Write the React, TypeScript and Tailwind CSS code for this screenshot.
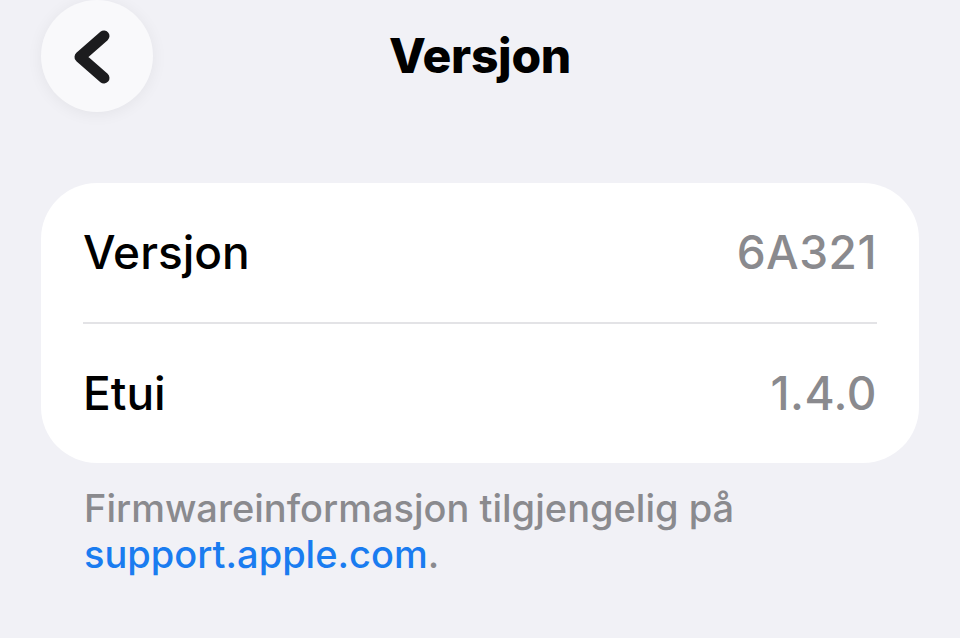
import React from "react";

const rows = [
  { label: "Versjon", value: "6A321" },
  { label: "Etui", value: "1.4.0" },
];

const BackButton = () => (
  <button className="flex h-[112px] w-[112px] items-center justify-center rounded-full bg-[#f9f9fb] shadow-[0_2px_16px_rgba(0,0,0,0.06)]">
    <svg width="112" height="112" viewBox="0 0 112 112" fill="none">
      <path
        d="M63 36 L39 57 L63 78"
        stroke="#1c1c1e"
        strokeWidth="11"
        strokeLinecap="round"
        strokeLinejoin="round"
      />
    </svg>
  </button>
);

export default function App() {
  return (
    <div className="h-[638px] w-[960px] overflow-hidden bg-[#f1f1f6] font-['Inter',sans-serif]">
      <div className="relative flex h-[112px] items-center justify-center">
        <div className="absolute left-[41px] top-0">
          <BackButton />
        </div>
        <h1 className="text-[48px] font-extrabold tracking-[-0.3px] text-black">
          Versjon
        </h1>
      </div>

      <div className="mx-[41px] mt-[71px] rounded-[56px] bg-white">
        {rows.map((row, i) => (
          <div key={row.label} className="px-[42px]">
            {i > 0 && <div className="h-[2px] bg-[#e3e3e6]" />}
            <div className="flex h-[139px] items-center justify-between">
              <span className="text-[46px] font-medium text-black">
                {row.label}
              </span>
              <span className="text-[46px] font-medium tracking-[0.5px] text-[#8a8a8e]">
                {row.value}
              </span>
            </div>
          </div>
        ))}
      </div>

      <p className="mt-[22px] px-[84px] text-[38px] font-medium leading-[46px] text-[#8a8a8e]">
        Firmwareinformasjon tilgjengelig på{" "}
        <span className="text-[#1a7cf0]">support.apple.com</span>.
      </p>
    </div>
  );
}
